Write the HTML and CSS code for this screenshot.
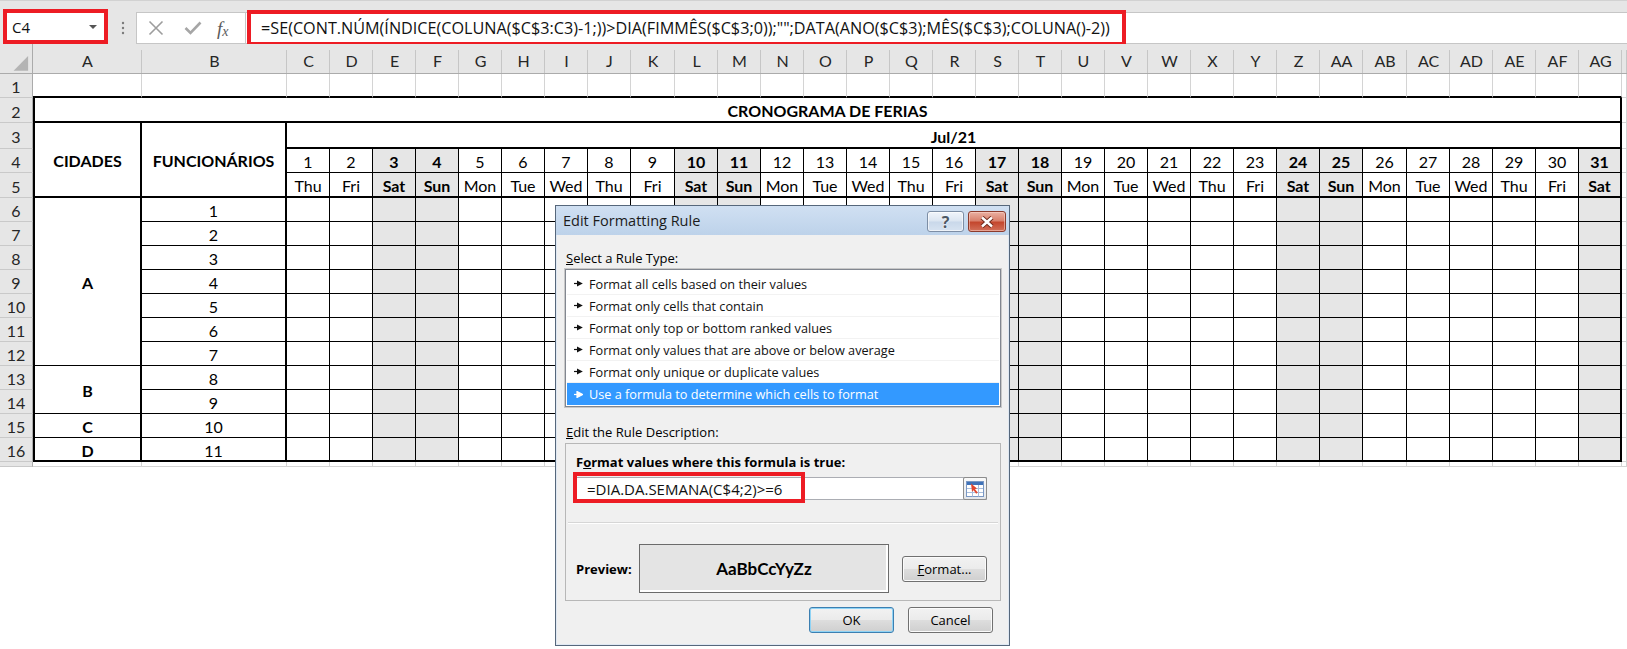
FILE: index.html
```html
<!DOCTYPE html>
<html lang="pt">
<head>
<meta charset="utf-8">
<title>Cronograma de Férias</title>
<link rel="stylesheet" href="styles.css">
</head>
<body>
<div class="app">
  <header class="toolbar">
    <div class="namebox">
      <span class="namebox-ref">C4</span>
      <span class="namebox-caret"></span>
    </div>
    <svg class="grip" width="4" height="14" viewBox="0 0 4 14"><circle cx="2" cy="2" r="1.2"/><circle cx="2" cy="7" r="1.2"/><circle cx="2" cy="12" r="1.2"/></svg>
    <div class="fx-buttons">
      <svg class="fx-cancel" width="16" height="16" viewBox="0 0 16 16"><path d="M1.5 1.5L14.5 14.5M14.5 1.5L1.5 14.5"/></svg>
      <svg class="fx-enter" width="18" height="14" viewBox="0 0 18 14"><path d="M1.5 7L6.5 12L16.5 1.5"/></svg>
      <span class="fx-label"><i>f</i><i class="fx-x">x</i></span>
    </div>
    <div class="formula-input">
      <span class="formula-text">=SE(CONT.NÚM(ÍNDICE(COLUNA($C$3:C3)-1;))&gt;DIA(FIMMÊS($C$3;0));"";DATA(ANO($C$3);MÊS($C$3);COLUNA()-2))</span>
    </div>
    <div class="mark mark-formula"></div>
  </header>

  <div class="sheet" id="sheet"></div>

  <div class="dialog">
    <div class="dlg-title">
      <span class="dlg-title-text">Edit Formatting Rule</span>
      <div class="caption-btns">
        <button class="cap-btn cap-help">?</button>
        <button class="cap-btn cap-close">
          <svg width="16" height="12" viewBox="0 0 16 12"><path class="x-back" d="M3 1.5L13 10.5M13 1.5L3 10.5"/><path class="x-front" d="M3 1.5L13 10.5M13 1.5L3 10.5"/></svg>
        </button>
      </div>
    </div>
    <div class="dlg-body">
      <div class="dlg-label"><u>S</u>elect a Rule Type:</div>
      <ul class="rule-list">
        <li><svg class="rule-arrow" width="9" height="7" viewBox="0 0 9 7"><path d="M0 3.5H4"/><path class="head" d="M3 0.5L8.8 3.5L3 6.5Z"/></svg>Format all cells based on their values</li>
        <li><svg class="rule-arrow" width="9" height="7" viewBox="0 0 9 7"><path d="M0 3.5H4"/><path class="head" d="M3 0.5L8.8 3.5L3 6.5Z"/></svg>Format only cells that contain</li>
        <li><svg class="rule-arrow" width="9" height="7" viewBox="0 0 9 7"><path d="M0 3.5H4"/><path class="head" d="M3 0.5L8.8 3.5L3 6.5Z"/></svg>Format only top or bottom ranked values</li>
        <li><svg class="rule-arrow" width="9" height="7" viewBox="0 0 9 7"><path d="M0 3.5H4"/><path class="head" d="M3 0.5L8.8 3.5L3 6.5Z"/></svg>Format only values that are above or below average</li>
        <li><svg class="rule-arrow" width="9" height="7" viewBox="0 0 9 7"><path d="M0 3.5H4"/><path class="head" d="M3 0.5L8.8 3.5L3 6.5Z"/></svg>Format only unique or duplicate values</li>
        <li class="selected"><svg class="rule-arrow" width="9" height="7" viewBox="0 0 9 7"><path d="M0 3.5H4"/><path class="head" d="M3 0.5L8.8 3.5L3 6.5Z"/></svg>Use a formula to determine which cells to format</li>
      </ul>
      <div class="dlg-label"><u>E</u>dit the Rule Description:</div>
      <div class="rule-desc">
        <div class="desc-label">F<u>o</u>rmat values where this formula is true:</div>
        <div class="ref-input">
          <span class="ref-text">=DIA.DA.SEMANA(C$4;2)&gt;=6</span>
          <button class="ref-btn">
            <svg width="18" height="16" viewBox="0 0 18 16">
              <rect x="0.5" y="0.5" width="17" height="15" fill="#fff" stroke="#7a98c4"/>
              <rect x="1" y="1" width="16" height="3" fill="#3f72b8"/>
              <path d="M1 7.5H17M1 11.5H17M6.5 4V15.5M12.5 4V15.5" stroke="#a9bedc" fill="none"/>
              <path d="M5 2.5L11 7.5L9 8.2L11.8 11.6L10.2 12.8L7.6 9.3L6 10.8Z" fill="#e2472f"/>
            </svg>
          </button>
          <span class="mark mark-rule"></span>
        </div>
        <hr class="desc-sep">
        <div class="preview-row">
          <span class="preview-label">Preview:</span>
          <div class="preview-box">AaBbCcYyZz</div>
          <button class="btn btn-format"><u>F</u>ormat...</button>
        </div>
      </div>
      <div class="dlg-actions">
        <button class="btn btn-default">OK</button>
        <button class="btn">Cancel</button>
      </div>
    </div>
  </div>
</div>
<script src="script.js"></script>
</body>
</html>
```

FILE: styles.css
```css
:root {
  --chrome: #e6e6e6;
  --head: #e6e6e6;
  --head-line: #ababab;
  --grid: #d4d4d4;
  --weekend: #e6e6e6;
  --mark: #ed1c24;
  --sheet-font: "Lato", "Liberation Sans", sans-serif;
  --ui-font: "Open Sans", "Noto Sans", sans-serif;
}

* { box-sizing: border-box; }

html, body {
  margin: 0;
  padding: 0;
  background: #fff;
}

body {
  width: 1627px;
  height: 649px;
  overflow: hidden;
  font-family: var(--ui-font);
}

.app {
  position: relative;
  width: 1627px;
  height: 649px;
}

/* ---------- formula bar ---------- */
.toolbar {
  position: relative;
  height: 44px;
  background: var(--chrome);
  border-top: 1px solid #d2d2d2;
  display: flex;
  align-items: flex-start;
}

.namebox {
  margin: 8px 0 0 3px;
  width: 105px;
  height: 35px;
  background: #fff;
  border: 4px solid var(--mark);
  display: flex;
  align-items: center;
  padding: 0 7px 0 5px;
  font-size: 15px;
  color: #111;
}

.namebox-caret {
  margin-left: auto;
  width: 0;
  height: 0;
  border-left: 4px solid transparent;
  border-right: 4px solid transparent;
  border-top: 4px solid #555;
}

.grip {
  margin: 20px 0 0 13px;
  fill: #7a7a7a;
}

.fx-buttons {
  margin: 11px 0 0 11px;
  width: 109px;
  height: 32px;
  background: #fff;
  border: 1px solid #c6c6c6;
  border-right: 0;
  display: flex;
  align-items: center;
  padding-left: 11px;
}

.fx-cancel path {
  stroke: #9d9d9d;
  stroke-width: 1.6;
  fill: none;
}

.fx-enter {
  margin-left: 20px;
}

.fx-enter path {
  stroke: #a6a6a6;
  stroke-width: 2.6;
  fill: none;
}

.fx-label {
  margin-left: 15px;
  font-family: "Liberation Serif", serif;
  font-size: 19px;
  color: #5b5b5b;
  line-height: 1;
}

.fx-x {
  font-size: 14px;
  position: relative;
  top: 1px;
}

.formula-input {
  margin-top: 11px;
  flex: 1;
  height: 32px;
  background: #fff;
  border: 1px solid #c6c6c6;
  border-right: 0;
  display: flex;
  align-items: center;
  padding-left: 15px;
  font-size: 16.2px;
  color: #111;
  white-space: nowrap;
  overflow: hidden;
}

.mark {
  position: absolute;
  border: 4px solid var(--mark);
  pointer-events: none;
}

.mark-formula {
  left: 247px;
  top: 9px;
  width: 879px;
  height: 36px;
}

/* ---------- worksheet ---------- */
.sheet {
  display: grid;
  grid-template-columns: 33px 109px 145px repeat(8, 43px) 44px repeat(16, 43px) 44px repeat(5, 43px) 1fr;
  grid-template-rows: 30px 24px 25px 26px 24px 25px repeat(11, 24px) 5px;
  font-family: var(--sheet-font);
  font-size: 16px;
  color: #000;
}

.corner,
.col-head,
.row-head {
  background: var(--head);
  color: #262626;
  display: flex;
  align-items: center;
  justify-content: center;
}

.corner {
  border-right: 1px solid var(--head-line);
  border-bottom: 1px solid var(--head-line);
}

.corner svg { display: block; }

.col-head {
  position: relative;
  border-bottom: 1px solid var(--head-line);
  padding-top: 4px;
}

.col-head::after {
  content: "";
  position: absolute;
  right: 0;
  top: 6px;
  bottom: 0;
  width: 1px;
  background: #c6c6c6;
}

.row-head {
  border-right: 1px solid var(--head-line);
  border-bottom: 1px solid #c9c9c9;
  padding-top: 2px;
}

.cell {
  background: #fff;
  border-right: 1px solid var(--grid);
  border-bottom: 1px solid var(--grid);
  display: flex;
  align-items: center;
  justify-content: center;
  padding-top: 2px;
  white-space: nowrap;
  overflow: hidden;
}

.cell.t { border-color: #000; }
.cell.edge-top { border-bottom: 2px solid #000; }
.bl2 { border-left: 2px solid #000; }
.br2 { border-right-width: 2px; }
.bb2 { border-bottom-width: 2px; }
.we { background: var(--weekend); }
.b { font-weight: 700; }

.span-all { grid-column: span 33; }
.span-days { grid-column: span 31; }
.span-r2 { grid-row: span 2; }
.span-r3 { grid-row: span 3; }
.span-r7 { grid-row: span 7; }

/* ---------- Edit Formatting Rule dialog ---------- */
.dialog {
  position: absolute;
  left: 555px;
  top: 205px;
  width: 455px;
  height: 441px;
  background: #f0f0f0;
  border: 1px solid #56677b;
  box-shadow: inset 0 0 0 1px #dfe8f3;
  display: flex;
  flex-direction: column;
  font-family: var(--ui-font);
  font-size: 13px;
  color: #000;
}

.dlg-title {
  flex: none;
  height: 29px;
  display: flex;
  align-items: flex-start;
  background: linear-gradient(#d0e0f2, #bdd2ea);
}

.dlg-title-text {
  margin: 5px 0 0 7px;
  font-size: 14.5px;
  color: #1b1b1b;
}

.caption-btns {
  margin: 5px 3px 0 auto;
  display: flex;
  gap: 4px;
}

.cap-btn {
  height: 21px;
  padding: 0;
  border-radius: 3px;
  display: flex;
  align-items: center;
  justify-content: center;
}

.cap-help {
  width: 37px;
  border: 1px solid #7d8ea5;
  background: linear-gradient(#f1f5fb, #dbe5f1 48%, #c9d8ea 52%, #d7e3f1);
  box-shadow: inset 0 0 0 1px rgba(255, 255, 255, 0.6);
  font-family: var(--ui-font);
  font-weight: 700;
  font-size: 16px;
  color: #4d5866;
  text-shadow: 0 0 1px #fff, 0 0 2px #fff;
}

.cap-close {
  width: 38px;
  border: 1px solid #8c3b2c;
  background: linear-gradient(#eab0a2, #d9816d 45%, #c4472e 55%, #d2705a);
  box-shadow: inset 0 0 0 1px rgba(255, 220, 210, 0.5);
}

.cap-close .x-back { stroke: #6f2a1c; stroke-width: 4.4; fill: none; }
.cap-close .x-front { stroke: #fff; stroke-width: 2.4; fill: none; }

.dlg-body {
  flex: 1;
  display: flex;
  flex-direction: column;
  padding: 0 8px 0 9px;
}

.dlg-label {
  margin-top: 13px;
  line-height: 20px;
  height: 20px;
  padding-left: 1px;
}

.rule-list {
  margin: 1px 0 0;
  padding: 3px 1px 0;
  height: 138px;
  list-style: none;
  background: #fff;
  border: 1px solid #828790;
  box-shadow: 0 0 0 1px #c8c8c8;
  font-size: 12.7px;
}

.rule-list li {
  height: 22px;
  display: flex;
  align-items: center;
  padding-left: 7px;
  border-bottom: 1px solid #f2f2f2;
  color: #111;
  white-space: nowrap;
}

.rule-arrow {
  margin-right: 6px;
  flex: none;
}

.rule-arrow path { stroke: #111; stroke-width: 1.2; fill: none; }
.rule-arrow .head { fill: #111; stroke: none; }

.rule-list li.selected {
  background: #3399ff;
  color: #fff;
  border-bottom: 0;
}

.rule-list li.selected .rule-arrow path { stroke: #fff; }
.rule-list li.selected .rule-arrow .head { fill: #fff; }

.dlg-label + .rule-desc { margin-top: 1px; }
.rule-list + .dlg-label { margin-top: 15px; }

.rule-desc {
  height: 158px;
  border: 1px solid #b7b7b7;
  padding-top: 8px;
  display: flex;
  flex-direction: column;
}

.desc-label {
  padding-left: 10px;
  line-height: 20px;
  font-weight: 700;
}

.ref-input {
  position: relative;
  margin: 5px 13px 0 7px;
  height: 23px;
  background: #fff;
  border: 1px solid #abadb3;
  display: flex;
  align-items: center;
}

.ref-text {
  padding-left: 13px;
  font-size: 15px;
  color: #111;
}

.ref-btn {
  margin: -1px -1px -1px auto;
  width: 24px;
  height: 23px;
  padding: 0;
  border: 1px solid #8d8d8d;
  border-radius: 2px;
  background: linear-gradient(#fafafa, #e3e6ea);
  display: flex;
  align-items: center;
  justify-content: center;
}

.mark-rule {
  left: -1px;
  top: -6px;
  width: 232px;
  height: 31px;
}

.desc-sep {
  margin: 22px 2px 0;
  height: 0;
  border: 0;
  border-top: 1px solid #d6d6d6;
  border-bottom: 1px solid #fff;
}

.preview-row {
  margin-top: 20px;
  padding-left: 10px;
  height: 49px;
  display: flex;
  align-items: center;
}

.preview-label {
  width: 63px;
  font-weight: 700;
}

.preview-box {
  width: 250px;
  height: 49px;
  border: 1px solid #6b6b6b;
  background: #e4e4e4;
  box-shadow: inset -2px -2px 0 #fff;
  display: flex;
  align-items: center;
  justify-content: center;
  font-family: var(--sheet-font);
  font-weight: 700;
  font-size: 17px;
}

.btn {
  width: 85px;
  height: 26px;
  padding: 0;
  border: 1px solid #707070;
  border-radius: 3px;
  background: linear-gradient(#f2f2f2, #ebebeb 48%, #dddddd 52%, #cfcfcf);
  box-shadow: inset 0 0 0 1px #fbfbfb;
  font-family: var(--ui-font);
  font-size: 13px;
  color: #000;
}

.btn-format { margin-left: 13px; }

.btn-default {
  border-color: #3c7fb1;
  box-shadow: inset 0 0 0 1px #8fd3f5;
}

.dlg-actions {
  margin-top: 6px;
  padding-right: 8px;
  display: flex;
  justify-content: flex-end;
  gap: 14px;
}
```

FILE: script.js
```js
// Builds the "Cronograma de Férias" worksheet grid for July 2021.
(function () {
  var sheet = document.getElementById('sheet');
  var WEEK = ['Thu', 'Fri', 'Sat', 'Sun', 'Mon', 'Tue', 'Wed']; // 1 Jul 2021 was a Thursday
  var DAYS = 31;
  var COLS = 33; // A .. AG
  var cities = { 6: ['A', 7], 13: ['B', 2], 15: ['C', 1], 16: ['D', 1] };

  function colName(i) {
    return i < 26 ? String.fromCharCode(65 + i) : 'A' + String.fromCharCode(39 + i);
  }

  function add(cls, text) {
    var el = document.createElement('div');
    el.className = cls;
    if (text !== undefined) el.textContent = text;
    sheet.appendChild(el);
    return el;
  }

  function weekday(d) { return WEEK[(d - 1) % 7]; }

  function dayClass(d) {
    var w = weekday(d);
    return (w === 'Sat' || w === 'Sun' ? ' we b' : '') + (d === DAYS ? ' br2' : '');
  }

  var d, i, r;

  // column headings
  add('corner').innerHTML =
    '<svg width="33" height="30" viewBox="0 0 33 30"><path d="M14 27H29V12Z" fill="#b4b4b4"/></svg>';
  for (i = 0; i < COLS; i++) add('col-head', colName(i));
  add('col-head');

  // row 1 (its bottom edge is the top of the table)
  add('row-head', '1');
  for (i = 0; i < COLS; i++) add('cell edge-top');
  add('cell');

  // row 2: title
  add('row-head', '2');
  add('cell t bl2 br2 bb2 b span-all', 'CRONOGRAMA DE FERIAS');
  add('cell');

  // row 3: headings and month
  add('row-head', '3');
  add('cell t bl2 br2 bb2 b span-r3', 'CIDADES');
  add('cell t br2 bb2 b span-r3', 'FUNCIONÁRIOS');
  add('cell t br2 bb2 b span-days', 'Jul/21');
  add('cell');

  // row 4: day numbers
  add('row-head', '4');
  for (d = 1; d <= DAYS; d++) add('cell t' + dayClass(d), String(d));
  add('cell');

  // row 5: weekday names
  add('row-head', '5');
  for (d = 1; d <= DAYS; d++) add('cell t bb2' + dayClass(d), weekday(d));
  add('cell');

  // rows 6..16: employees
  for (r = 6; r <= 16; r++) {
    var bottom = r === 16 ? ' bb2' : '';
    add('row-head', String(r));
    if (cities[r]) {
      var span = cities[r][1];
      add('cell t bl2 br2 b span-r' + span + (r + span - 1 === 16 ? ' bb2' : ''), cities[r][0]);
    }
    add('cell t br2' + bottom, String(r - 5));
    for (d = 1; d <= DAYS; d++) add('cell t' + dayClass(d) + bottom);
    add('cell');
  }

  // row 17, only its top edge is in view
  add('row-head');
  for (i = 0; i <= COLS; i++) add('cell');
})();
```
